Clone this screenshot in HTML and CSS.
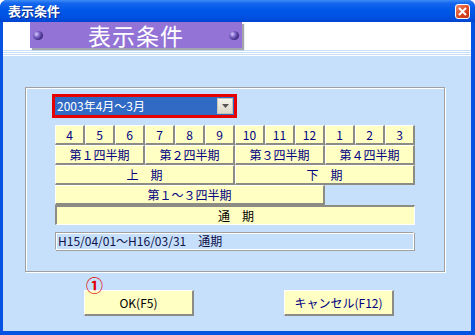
FILE: index.html
```html
<!DOCTYPE html>
<html lang="ja">
<head>
    <meta charset="UTF-8">
    <title>表示条件</title>
    <link rel="stylesheet" href="styles.css">
</head>
<body>
    <div class="window">
        <div class="titlebar">
            <span class="title">表示条件</span>
            <span class="close">
                <svg width="9" height="9" viewBox="0 0 9 9"><path d="M1 1L8 8M8 1L1 8" stroke="#fff" stroke-width="2"/></svg>
            </span>
        </div>
        <div class="client">
            <div class="header">
                <div class="banner">
                    <span class="ball"></span>
                    <span class="banner-text">表示条件</span>
                    <span class="ball"></span>
                </div>
            </div>
            <div class="stripes"></div>

            <div class="group">
                <div class="combo">
                    <div class="combo-inner">
                        <span class="combo-text">2003年4月〜3月</span>
                        <span class="combo-btn">
                            <svg width="7" height="4" viewBox="0 0 7 4"><path d="M0 0H7L3.5 4Z" fill="#555"/></svg>
                        </span>
                    </div>
                </div>

                <div class="grid">
                    <!-- 月 -->
                    <div class="cell">4</div>
                    <div class="cell">5</div>
                    <div class="cell">6</div>
                    <div class="cell">7</div>
                    <div class="cell">8</div>
                    <div class="cell">9</div>
                    <div class="cell">10</div>
                    <div class="cell">11</div>
                    <div class="cell">12</div>
                    <div class="cell">1</div>
                    <div class="cell">2</div>
                    <div class="cell">3</div>
                    <!-- 四半期 -->
                    <div class="cell span3">第１四半期</div>
                    <div class="cell span3">第２四半期</div>
                    <div class="cell span3">第３四半期</div>
                    <div class="cell span3">第４四半期</div>
                    <!-- 半期 -->
                    <div class="cell span6">上　期</div>
                    <div class="cell span6">下　期</div>
                    <div class="cell span9">第１〜３四半期</div>
                    <div class="cell span12 pressed">通　期</div>
                </div>

                <div class="range">H15/04/01〜H16/03/31　通期</div>
            </div>

            <div class="actions">
                <div class="btn-wrap">
                    <span class="mark">①</span>
                    <button class="btn ok">OK(F5)</button>
                </div>
                <button class="btn cancel">キャンセル(F12)</button>
            </div>
        </div>
    </div>
</body>
</html>
```

FILE: styles.css
```css
body {
    margin: 0;
    font-family: "Noto Sans CJK JP", "DejaVu Sans", sans-serif;
    font-size: 12px;
}
.window {
    width: 475px;
    height: 335px;
    box-sizing: border-box;
    background: #0553e0;
    border-radius: 7px 7px 0 0;
    display: flex;
    flex-direction: column;
    overflow: hidden;
}
.titlebar {
    height: 22px;
    display: flex;
    align-items: center;
    justify-content: space-between;
    padding: 0 5px 0 8px;
    background: linear-gradient(#3d8cf7 0, #1466ee 15%, #0058e8 45%, #0050e0 80%, #0044d0 100%);
}
.title {
    color: #fff;
    font-weight: bold;
    font-size: 13px;
    line-height: 14px;
    text-shadow: 1px 1px 0 #0a2c8a;
}
.close {
    width: 13px;
    height: 13px;
    border: 1px solid #fff;
    border-radius: 3px;
    background: linear-gradient(135deg, #f08a6a, #d84420 60%, #c23514);
    display: flex;
    align-items: center;
    justify-content: center;
}
.client {
    flex: 1;
    margin: 0 4px 4px 3px;
    background: #c6e0fb;
    display: flex;
    flex-direction: column;
}
.header {
    height: 27px;
    background: #fff;
    padding-left: 27px;
}
.banner {
    width: 212px;
    height: 26px;
    background: #9373d6;
    box-shadow: 2px 2px 1px rgba(90, 90, 110, 0.55);
    display: flex;
    align-items: center;
    justify-content: space-between;
    padding: 0 3px;
    box-sizing: border-box;
    position: relative;
    z-index: 1;
}
.ball {
    width: 10px;
    height: 9px;
    border-radius: 50%;
    background: radial-gradient(circle at 35% 35%, #d8ccff 0, #7b62c8 35%, #2c1b66 80%);
}
.banner-text {
    color: #fff;
    font-size: 23px;
    line-height: 26px;
    letter-spacing: 1px;
}
.stripes {
    height: 8px;
    background: repeating-linear-gradient(#fff 0 1px, #c6e0fb 1px 2px);
}
.group {
    width: 420px;
    height: 185px;
    box-sizing: border-box;
    margin: 30px 0 0 22px;
    border: 1px solid #a0a0a0;
    box-shadow: 1px 1px 0 #fff, inset 1px 1px 0 #fff;
    padding: 6px 0 0 26px;
}
.combo {
    width: 185px;
    height: 24px;
    box-sizing: border-box;
    border: 3px solid #e60000;
}
.combo-inner {
    height: 18px;
    background: #316ac5;
    display: flex;
    align-items: center;
    justify-content: space-between;
    padding: 0 1px 0 2px;
}
.combo-text {
    color: #fff;
    line-height: 16px;
    font-size: 12px;
}
.combo-btn {
    width: 16px;
    height: 16px;
    box-sizing: border-box;
    background: linear-gradient(#f6f4ec, #dcd8c8);
    border: 1px solid #c9c5b4;
    display: flex;
    align-items: center;
    justify-content: center;
}
.grid {
    margin: 7px 0 0 3px;
    display: grid;
    grid-template-columns: repeat(12, 30px);
    grid-auto-rows: 20px;
    width: 360px;
}
.cell {
    background: #ffffc4;
    border-top: 1px solid #fff;
    border-left: 1px solid #fff;
    border-right: 2px solid #8c8c84;
    border-bottom: 2px solid #8c8c84;
    color: #000080;
    text-align: center;
    line-height: 17px;
    font-size: 12px;
}
.span3 { grid-column: span 3; }
.span6 { grid-column: span 6; }
.span9 { grid-column: span 9; }
.span12 { grid-column: span 12; }
.cell.pressed {
    border-top: 2px solid #8c8c84;
    border-left: 2px solid #8c8c84;
    border-right: 1px solid #fff;
    border-bottom: 1px solid #fff;
    color: #000;
    padding-left: 1px;
}
.range {
    margin: 7px 0 0 3px;
    width: 359px;
    height: 18px;
    box-sizing: border-box;
    border: 1px solid #a0a0a0;
    border-right-color: #fff;
    border-bottom-color: #fff;
    box-shadow: inset 1px 1px 0 #fff, 1px 1px 0 #a0a0a0;
    color: #10104a;
    line-height: 15px;
    padding-left: 2px;
}
.actions {
    display: flex;
    gap: 90px;
    padding-left: 81px;
    margin-top: 18px;
}
.btn-wrap {
    position: relative;
}
.mark {
    position: absolute;
    left: 2px;
    top: -14px;
    color: #e00000;
    font-size: 17px;
    font-weight: bold;
    line-height: 17px;
}
.btn {
    width: 110px;
    height: 26px;
    background: #ffffc4;
    border-top: 1px solid #fff;
    border-left: 1px solid #fff;
    border-right: 2px solid #8c8c84;
    border-bottom: 2px solid #8c8c84;
    font-family: "Noto Sans CJK JP", "DejaVu Sans", sans-serif;
    font-size: 12px;
    padding: 0;
}
.ok {
    color: #000;
}
.cancel {
    color: #000080;
}
```
